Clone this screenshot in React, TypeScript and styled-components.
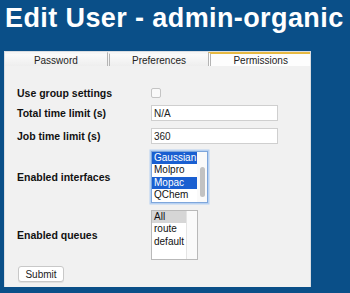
import React from "react";
import styled, { createGlobalStyle } from "styled-components";

const GlobalStyle = createGlobalStyle`
  html, body {
    margin: 0;
    padding: 0;
    background: #0a4f88;
    font-family: "Liberation Sans", Arial, Helvetica, sans-serif;
  }
`;

const Page = styled.div`
  padding: 3px 0 0 5px;
`;

const Title = styled.h1`
  margin: 0;
  font-size: 27px;
  line-height: 30px;
  letter-spacing: 0.4px;
  font-weight: bold;
  color: #ffffff;
  white-space: nowrap;
`;

const Panel = styled.div`
  width: 305px;
  margin-top: 19px;
  background: #f1f1f1;
  box-shadow: 0 0 0 1px #d9dde2;
`;

const TabBar = styled.div`
  display: grid;
  grid-template-columns: 1fr 1fr 1fr;
  height: 14px;
`;

const Tab = styled.div<{ $active?: boolean; $first?: boolean }>`
  box-sizing: border-box;
  display: flex;
  align-items: center;
  justify-content: center;
  font-size: 10px;
  color: #222;
  background: ${(p) =>
    p.$active ? "#fdfdfd" : "linear-gradient(#fbfbfb, #eeeeee)"};
  border-top: 2px solid ${(p) => (p.$active ? "#e6b941" : "#f6f6f6")};
  border-left: ${(p) => (p.$first ? "none" : "3px double #b4b4b4")};
`;

const Body = styled.div`
  padding: 22px 12px 5px 12px;
`;

const FormGrid = styled.div`
  display: grid;
  grid-template-columns: 134px auto;
  grid-template-rows: 10px 16px 16px 52px 50px;
  row-gap: 7px;
  align-items: center;
`;

const Label = styled.div`
  font-size: 10.5px;
  font-weight: bold;
  color: #111;
`;

const CheckBox = styled.div`
  width: 8px;
  height: 8px;
  border: 1px solid #c4c4c4;
  border-radius: 2px;
  background: #f9f9f9;
`;

const TextInput = styled.div`
  box-sizing: border-box;
  width: 127px;
  height: 16px;
  border: 1px solid #cfcfcf;
  background: #fff;
  font-size: 10px;
  color: #222;
  padding-left: 2px;
  display: flex;
  align-items: center;
`;

const ListBox = styled.div<{ $width: number; $height: number; $focused?: boolean }>`
  box-sizing: border-box;
  width: ${(p) => p.$width}px;
  height: ${(p) => p.$height}px;
  border: 1px solid ${(p) => (p.$focused ? "#7ea6db" : "#b9b9b9")};
  box-shadow: ${(p) => (p.$focused ? "0 0 0 1.5px #b7d1f2" : "none")};
  background: #fff;
  display: flex;
  overflow: hidden;
`;

const Options = styled.div`
  flex: 1;
`;

const Option = styled.div<{ $selected?: "blue" | "gray" }>`
  height: 12.3px;
  line-height: 12.3px;
  font-size: 10px;
  padding-left: 2px;
  color: ${(p) => (p.$selected === "blue" ? "#fff" : "#111")};
  background: ${(p) =>
    p.$selected === "blue"
      ? "#1a5fd1"
      : p.$selected === "gray"
      ? "#d6d6d6"
      : "transparent"};
`;

const ScrollTrack = styled.div<{ $bordered?: boolean }>`
  width: 10px;
  display: flex;
  justify-content: center;
  background: #fafafa;
  border-left: ${(p) => (p.$bordered ? "1px solid #e4e4e4" : "none")};
`;

const ScrollThumb = styled.div`
  width: 5px;
  height: 30px;
  margin-top: 15px;
  border-radius: 3px;
  background: #c2c2c2;
`;

const SubmitButton = styled.button`
  margin: 6px 0 0 1px;
  width: 46px;
  height: 16px;
  padding: 0;
  font-family: inherit;
  font-size: 10px;
  color: #222;
  background: #fff;
  border: 1px solid #c8c8c8;
  border-radius: 3px;
  box-shadow: 0 1px 0 #e0e0e0;
  display: block;
`;

const App: React.FC = () => {
  return (
    <>
      <GlobalStyle />
      <Page>
        <Title>Edit User - admin-organic</Title>
        <Panel>
          <TabBar>
            <Tab $first>Password</Tab>
            <Tab>Preferences</Tab>
            <Tab $active>Permissions</Tab>
          </TabBar>
          <Body>
            <FormGrid>
              <Label>Use group settings</Label>
              <CheckBox />

              <Label>Total time limit (s)</Label>
              <TextInput>N/A</TextInput>

              <Label>Job time limit (s)</Label>
              <TextInput>360</TextInput>

              <Label>Enabled interfaces</Label>
              <ListBox $width={57} $height={52} $focused>
                <Options>
                  <Option $selected="blue">Gaussian</Option>
                  <Option>Molpro</Option>
                  <Option $selected="blue">Mopac</Option>
                  <Option>QChem</Option>
                </Options>
                <ScrollTrack>
                  <ScrollThumb />
                </ScrollTrack>
              </ListBox>

              <Label>Enabled queues</Label>
              <ListBox $width={47} $height={50}>
                <Options>
                  <Option $selected="gray">All</Option>
                  <Option>route</Option>
                  <Option>default</Option>
                </Options>
                <ScrollTrack $bordered />
              </ListBox>
            </FormGrid>
            <SubmitButton>Submit</SubmitButton>
          </Body>
        </Panel>
      </Page>
    </>
  );
};

export default App;
